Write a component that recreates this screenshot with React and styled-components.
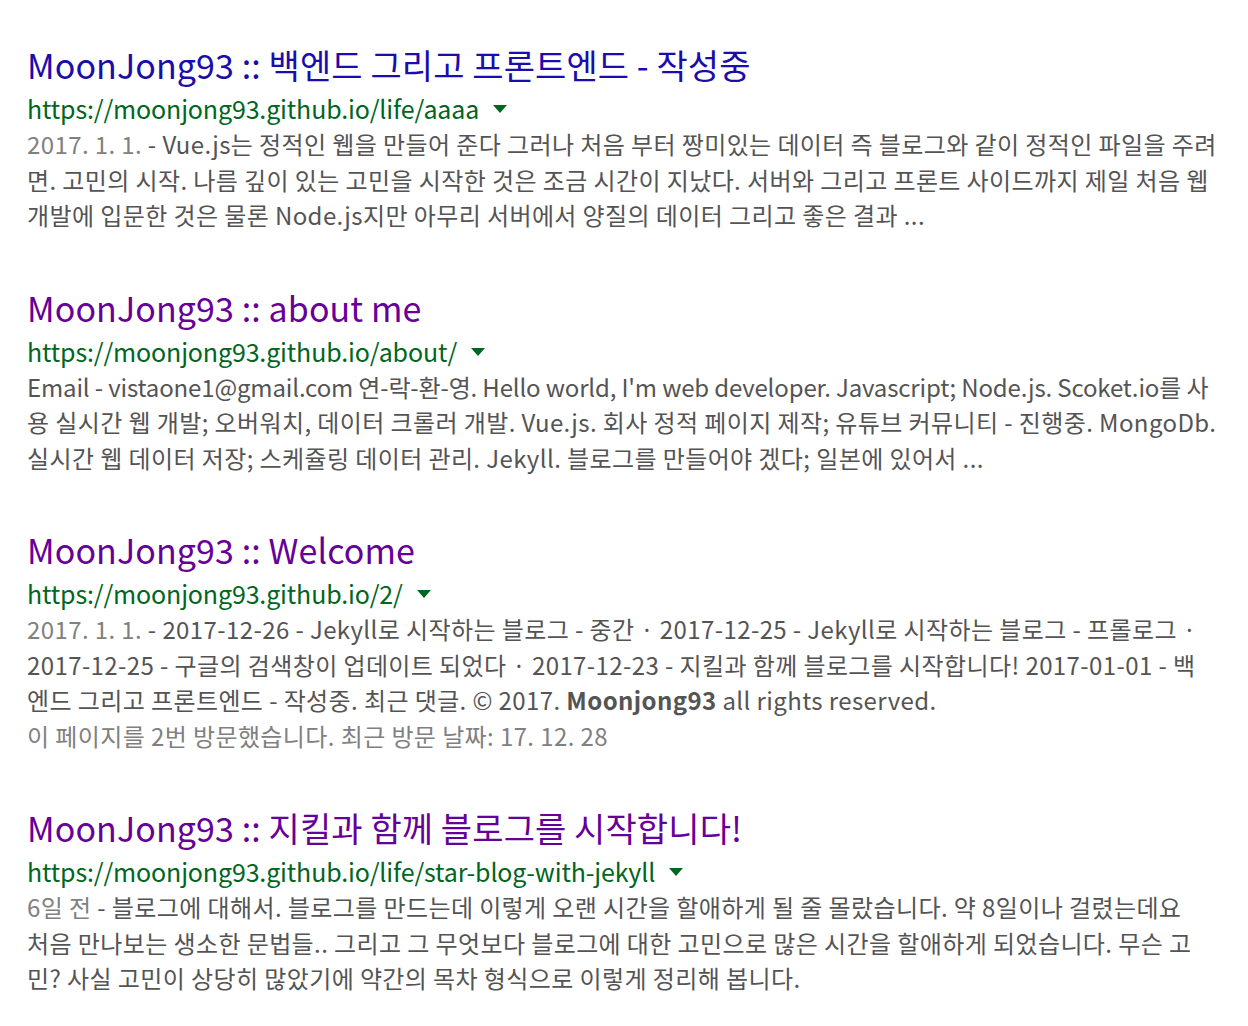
import styled, { createGlobalStyle } from "styled-components";

const GlobalStyle = createGlobalStyle`
  body {
    margin: 0;
    background: #fff;
    font-family: "Noto Sans CJK KR", "Noto Sans", sans-serif;
  }
`;

const results = [
  {
    title: "MoonJong93 :: 백엔드 그리고 프론트엔드 - 작성중",
    visited: false,
    url: "https://moonjong93.github.io/life/aaaa",
    date: "2017. 1. 1.",
    lines: [
      "Vue.js는 정적인 웹을 만들어 준다 그러나 처음 부터 짱미있는 데이터 즉 블로그와 같이 정적인 파일을 주려",
      "면. 고민의 시작. 나름 깊이 있는 고민을 시작한 것은 조금 시간이 지났다. 서버와 그리고 프론트 사이드까지 제일 처음 웹",
      "개발에 입문한 것은 물론 Node.js지만 아무리 서버에서 양질의 데이터 그리고 좋은 결과 ...",
    ],
  },
  {
    title: "MoonJong93 :: about me",
    visited: true,
    url: "https://moonjong93.github.io/about/",
    tightFirst: true,
    lines: [
      "Email - vistaone1@gmail.com 연-락-환-영. Hello world, I'm web developer. Javascript; Node.js. Scoket.io를 사",
      "용 실시간 웹 개발; 오버워치, 데이터 크롤러 개발. Vue.js. 회사 정적 페이지 제작; 유튜브 커뮤니티 - 진행중. MongoDb.",
      "실시간 웹 데이터 저장; 스케쥴링 데이터 관리. Jekyll. 블로그를 만들어야 겠다; 일본에 있어서 ...",
    ],
  },
  {
    title: "MoonJong93 :: Welcome",
    visited: true,
    url: "https://moonjong93.github.io/2/",
    date: "2017. 1. 1.",
    lines: [
      "2017-12-26 - Jekyll로 시작하는 블로그 - 중간 · 2017-12-25 - Jekyll로 시작하는 블로그 - 프롤로그 ·",
      "2017-12-25 - 구글의 검색창이 업데이트 되었다 · 2017-12-23 - 지킬과 함께 블로그를 시작합니다! 2017-01-01 - 백",
      ["엔드 그리고 프론트엔드 - 작성중. 최근 댓글. © 2017. ", <b key="b">Moonjong93</b>, " all rights reserved."],
    ],
    note: "이 페이지를 2번 방문했습니다. 최근 방문 날짜: 17. 12. 28",
  },
  {
    title: "MoonJong93 :: 지킬과 함께 블로그를 시작합니다!",
    visited: true,
    url: "https://moonjong93.github.io/life/star-blog-with-jekyll",
    date: "6일 전",
    lines: [
      "블로그에 대해서. 블로그를 만드는데 이렇게 오랜 시간을 할애하게 될 줄 몰랐습니다. 약 8일이나 걸렸는데요",
      "처음 만나보는 생소한 문법들.. 그리고 그 무엇보다 블로그에 대한 고민으로 많은 시간을 할애하게 되었습니다. 무슨 고",
      "민? 사실 고민이 상당히 많았기에 약간의 목차 형식으로 이렇게 정리해 봅니다.",
    ],
  },
];

export default function App() {
  return (
    <>
      <GlobalStyle />
      <Page>
        {results.map((r) => (
          <Result key={r.url}>
            <Title href="#" $visited={r.visited}>{r.title}</Title>
            <UrlRow>
              <Url>{r.url}</Url>
              <Caret />
            </UrlRow>
            <Snippet>
              {r.lines.map((line, i) => (
                <Line key={i} $tight={i === 0 && r.tightFirst}>
                  {i === 0 && r.date ? (
                    <>
                      <DateText>{r.date}</DateText> -{" "}
                    </>
                  ) : null}
                  {line}
                </Line>
              ))}
              {r.note ? <Note>{r.note}</Note> : null}
            </Snippet>
          </Result>
        ))}
      </Page>
    </>
  );
}

const Page = styled.div`
  padding: 40px 0 20px 27px;
  display: flex;
  flex-direction: column;
  gap: 50px;
`;

const Result = styled.div`
  display: flex;
  flex-direction: column;
`;

const Title = styled.a`
  font-size: 34px;
  line-height: 50px;
  height: 50px;
  color: ${(p) => (p.$visited ? "#660099" : "#1a0dab")};
  text-decoration: none;
  white-space: nowrap;
  letter-spacing: 0.1px;
`;

const UrlRow = styled.div`
  display: flex;
  align-items: center;
  gap: 14px;
  height: 36px;
`;

const Url = styled.span`
  font-size: 25px;
  line-height: 36px;
  color: #006621;
  white-space: nowrap;
  letter-spacing: -0.15px;
`;

const Caret = styled.span`
  width: 0;
  height: 0;
  border-left: 7px solid transparent;
  border-right: 7px solid transparent;
  border-top: 8px solid #006621;
  margin-top: 2px;
`;

const Snippet = styled.div`
  display: flex;
  flex-direction: column;
  font-size: 24px;
  line-height: 35.5px;
  color: #545454;
  letter-spacing: 0.4px;
  b {
    font-weight: 700;
  }
`;

const Line = styled.div`
  white-space: nowrap;
  letter-spacing: ${(p) => (p.$tight ? "-0.15px" : "inherit")};
`;

const DateText = styled.span`
  color: #808080;
`;

const Note = styled.div`
  color: #808080;
  white-space: nowrap;
`;
